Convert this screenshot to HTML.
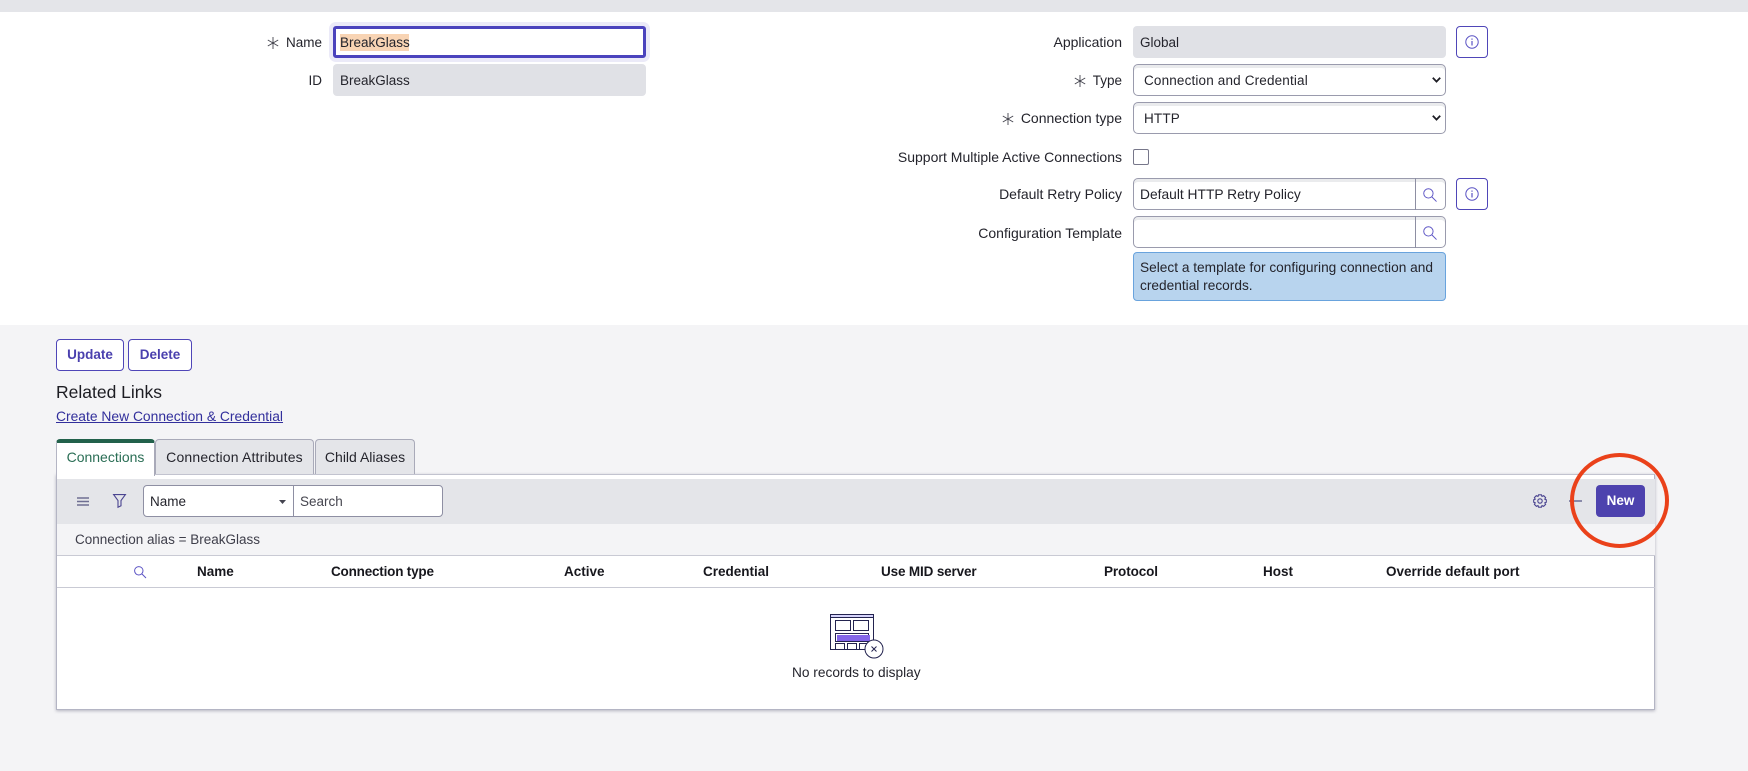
<!DOCTYPE html>
<html lang="en">
<head>
<meta charset="utf-8">
<title>Connection Alias</title>
<style>
html,body{margin:0;padding:0;width:1748px;height:771px;overflow:hidden;background:#f4f4f6}
body{position:relative;font-family:"Liberation Sans",sans-serif;font-size:13.5px;color:#24242c}
.a{position:absolute;box-sizing:border-box}
.t{position:absolute;white-space:nowrap;line-height:18px;height:18px}
.lr{text-align:right;right:626px;font-size:14px}
.ro{background:#e0e1e6;border-radius:4px}
.inp{background:#fff;border:1px solid #9a9bad;border-radius:5px;box-shadow:inset 0 3px 0 #eaebed}
.ib{border:1px solid #4f46b8;border-radius:4px;background:#fff}
.btn{border:1px solid #4f46b8;border-radius:4px;background:#fff;color:#4a40ae;font-weight:bold;text-align:center;line-height:30px;font-size:13.5px}
.h{font-weight:bold;top:563px;color:#17171d;font-size:13.5px}
.tab{background:#e4e5e9;border:1px solid #a9aab9;border-bottom:none;border-radius:4px 4px 0 0;line-height:34px;text-align:center;font-size:14px}
svg{position:absolute;overflow:visible}
</style>
</head>
<body>
<div class="a" style="left:0;top:0;width:1748px;height:12px;background:#e4e5e9"></div>
<div class="a" style="left:0;top:12px;width:1748px;height:313px;background:#fff"></div>

<!-- Left form -->
<svg style="left:267px;top:37px" width="12" height="12" viewBox="0 0 12 12" fill="none" stroke="#44444e" stroke-width=".9"><path d="M6 0V12M.8 3 11.2 9M11.2 3 .8 9"/></svg>
<span class="t" style="right:1426px;top:34px">Name</span>
<span class="t" style="right:1426px;top:72px">ID</span>
<div class="a" style="left:329px;top:22px;width:321px;height:40px;border-radius:7px;background:#ebeaf8"></div>
<div class="a" style="left:333px;top:26px;width:313px;height:32px;background:#fff;border:3px solid #4b43bd;border-radius:3px"></div>
<div class="a" style="left:340px;top:34px;width:69px;height:17px;background:#f8d4b4"></div>
<span class="t" style="left:340px;top:34px">BreakGlass</span>
<div class="a ro" style="left:333px;top:64px;width:313px;height:32px"></div>
<span class="t" style="left:340px;top:72px">BreakGlass</span>

<!-- Right form -->
<span class="t lr" style="top:33px">Application</span>
<div class="a ro" style="left:1133px;top:26px;width:313px;height:32px"></div>
<span class="t" style="left:1140px;top:34px">Global</span>
<div class="a ib" style="left:1456px;top:26px;width:32px;height:32px"></div>
<svg style="left:1465px;top:35px" width="14" height="14" viewBox="0 0 14 14" fill="none" stroke="#5b53c4"><circle cx="7" cy="7" r="6.2"/><path d="M7 6V10.5M7 3.5V4.8" stroke-width="1.2"/></svg>

<svg style="left:1074px;top:75px" width="12" height="12" viewBox="0 0 12 12" fill="none" stroke="#44444e" stroke-width=".9"><path d="M6 0V12M.8 3 11.2 9M11.2 3 .8 9"/></svg>
<span class="t lr" style="top:72px;font-size:13.5px">Type</span>
<div class="a inp" style="left:1133px;top:64px;width:313px;height:32px"></div>
<span class="t" style="left:1144px;top:72px;letter-spacing:.16px">Connection and Credential</span>
<svg style="left:1432px;top:77px" width="9" height="6" viewBox="0 0 9 6" fill="none" stroke="#1d1d24" stroke-width="1.8"><path d="M.8 .8 4.5 4.6 8.2 .8"/></svg>

<svg style="left:1002px;top:113px" width="12" height="12" viewBox="0 0 12 12" fill="none" stroke="#44444e" stroke-width=".9"><path d="M6 0V12M.8 3 11.2 9M11.2 3 .8 9"/></svg>
<span class="t lr" style="top:109px">Connection type</span>
<div class="a inp" style="left:1133px;top:102px;width:313px;height:32px"></div>
<span class="t" style="left:1144px;top:110px;letter-spacing:.16px">HTTP</span>
<svg style="left:1432px;top:115px" width="9" height="6" viewBox="0 0 9 6" fill="none" stroke="#1d1d24" stroke-width="1.8"><path d="M.8 .8 4.5 4.6 8.2 .8"/></svg>

<span class="t lr" style="top:148px">Support Multiple Active Connections</span>
<div class="a" style="left:1133px;top:149px;width:16px;height:16px;background:#fff;border:1px solid #77778a;border-radius:2px"></div>

<span class="t lr" style="top:185px">Default Retry Policy</span>
<div class="a inp" style="left:1133px;top:178px;width:313px;height:32px"></div>
<div class="a" style="left:1415px;top:178px;width:1px;height:32px;background:#8e8fa3"></div>
<span class="t" style="left:1140px;top:186px;font-size:13.8px">Default HTTP Retry Policy</span>
<svg style="left:1423px;top:188px" width="14" height="14" viewBox="0 0 15 15" fill="none" stroke="#5b53c4" stroke-width="1"><circle cx="5.8" cy="5.8" r="5"/><path d="M9.5 9.5 14.5 14.5"/></svg>
<div class="a ib" style="left:1456px;top:178px;width:32px;height:32px"></div>
<svg style="left:1465px;top:187px" width="14" height="14" viewBox="0 0 14 14" fill="none" stroke="#5b53c4"><circle cx="7" cy="7" r="6.2"/><path d="M7 6V10.5M7 3.5V4.8" stroke-width="1.2"/></svg>

<span class="t lr" style="top:224px">Configuration Template</span>
<div class="a inp" style="left:1133px;top:216px;width:313px;height:32px"></div>
<div class="a" style="left:1415px;top:216px;width:1px;height:32px;background:#8e8fa3"></div>
<svg style="left:1423px;top:226px" width="14" height="14" viewBox="0 0 15 15" fill="none" stroke="#5b53c4" stroke-width="1"><circle cx="5.8" cy="5.8" r="5"/><path d="M9.5 9.5 14.5 14.5"/></svg>

<div class="a" style="left:1133px;top:252px;width:313px;height:49px;background:#b8d4ee;border:1px solid #69a3dd;border-radius:4px"></div>
<span class="t" style="left:1140px;top:259px;font-size:13.7px">Select a template for configuring connection and</span>
<span class="t" style="left:1140px;top:277px;font-size:13.7px">credential records.</span>

<!-- Buttons -->
<div class="a btn" style="left:56px;top:339px;width:68px;height:32px">Update</div>
<div class="a btn" style="left:128px;top:339px;width:64px;height:32px">Delete</div>
<span class="t" style="left:56px;top:383px;font-size:17.5px;color:#1c1c22">Related Links</span>
<a class="t" style="left:56px;top:407px;color:#322f9c;text-decoration:underline;font-size:13.85px">Create New Connection &amp; Credential</a>

<!-- Tabs -->
<div class="a" style="left:56px;top:474px;width:1599px;height:236px;background:#fff;border:1px solid #b4b5c4;border-top-color:#c2c3cf;box-shadow:0 1px 3px rgba(60,60,90,.35)"></div>
<div class="a tab" style="left:56px;top:439px;width:99px;height:37px;background:#fff;border-top:4px solid #22614b;border-left:1px solid #b4b5c4;border-right:1px solid #a9aab9;color:#2a6e55;line-height:29px;z-index:2">Connections</div>
<div class="a tab" style="left:155px;top:439px;width:159px;height:35px;letter-spacing:.17px">Connection Attributes</div>
<div class="a tab" style="left:315px;top:439px;width:100px;height:35px">Child Aliases</div>

<!-- Toolbar -->
<div class="a" style="left:57px;top:479px;width:1598px;height:45px;background:#e4e5e9"></div>
<svg style="left:77px;top:497px" width="12" height="9" viewBox="0 0 12 9" fill="none" stroke="#6e6e92" stroke-width="1.6"><path d="M0 1H12M0 4.5H12M0 8H12"/></svg>
<svg style="left:113px;top:494px" width="13" height="14" viewBox="0 0 13 14" fill="none" stroke="#4a4490" stroke-width="1.1"><path d="M.6 .6H12.4L8 6.6V11.8L5 13.2V6.6Z"/></svg>
<div class="a" style="left:143px;top:485px;width:151px;height:32px;background:#fff;border:1px solid #8e8fa3;border-radius:4px 0 0 4px"></div>
<div class="a" style="left:293px;top:485px;width:150px;height:32px;background:#fff;border:1px solid #8e8fa3;border-radius:0 4px 4px 0"></div>
<span class="t" style="left:150px;top:493px">Name</span>
<svg style="left:279px;top:500px" width="7" height="4" viewBox="0 0 7 4"><path d="M0 0H7L3.5 4Z" fill="#444450"/></svg>
<span class="t" style="left:300px;top:493px;color:#45454f">Search</span>
<svg style="left:1533px;top:494px" width="14" height="14" viewBox="0 0 14 14" fill="none" stroke="#4a4490" stroke-width="1.1"><path d="M5.6 .8H8.4L9 2.4 10.7 1.7 12.6 3.6 11.8 5.2 13.3 5.8V8.2L11.8 8.8 12.6 10.4 10.6 12.3 9 11.6 8.4 13.2H5.6L5 11.6 3.4 12.3 1.4 10.4 2.2 8.8 .7 8.2V5.8L2.2 5.2 1.4 3.6 3.3 1.7 5 2.4Z"/><circle cx="7" cy="7" r="2.2"/></svg>
<div class="a" style="left:1569px;top:500px;width:13px;height:2px;background:#8a8aaa"></div>
<div class="a" style="left:1596px;top:485px;width:49px;height:32px;background:#4d42ae;border-radius:4px;color:#fff;font-weight:bold;text-align:center;line-height:32px;font-size:13.5px">New</div>

<!-- Filter row -->
<div class="a" style="left:57px;top:524px;width:1598px;height:31px;background:#f4f4f6"></div>
<span class="t" style="left:75px;top:531px;color:#3e3e4a">Connection alias = BreakGlass</span>
<div class="a" style="left:57px;top:555px;width:1598px;height:1px;background:#c9cad4"></div>
<svg style="left:134px;top:566px" width="12" height="12" viewBox="0 0 12 12" fill="none" stroke="#5b53c4"><circle cx="4.8" cy="4.8" r="4.2"/><path d="M8 8 12 12"/></svg>
<span class="t h" style="left:197px">Name</span>
<span class="t h" style="left:331px;letter-spacing:-.2px">Connection type</span>
<span class="t h" style="left:564px">Active</span>
<span class="t h" style="left:703px">Credential</span>
<span class="t h" style="left:881px;letter-spacing:-.15px">Use MID server</span>
<span class="t h" style="left:1104px;letter-spacing:-.1px">Protocol</span>
<span class="t h" style="left:1263px">Host</span>
<span class="t h" style="left:1386px">Override default port</span>
<div class="a" style="left:57px;top:587px;width:1598px;height:1px;background:#c9cad4"></div>

<!-- Empty state -->
<svg style="left:830px;top:614px" width="54" height="46" viewBox="0 0 54 46" fill="none" stroke="#23234f" stroke-width="1">
<rect x=".5" y=".5" width="43" height="35" fill="#fff"/>
<rect x=".5" y=".5" width="43" height="3" fill="#d6d4fb"/>
<rect x="5.5" y="6.5" width="15" height="10"/>
<rect x="23.5" y="6.5" width="15" height="10"/>
<rect x="5.5" y="19.5" width="33" height="8"/>
<rect x="7" y="21" width="33" height="6" fill="#8465e8" stroke="none"/>
<rect x="5.5" y="29.5" width="9" height="6"/>
<rect x="17.5" y="29.5" width="9" height="6"/>
<rect x="29.5" y="29.5" width="9" height="6"/>
<circle cx="44" cy="35" r="9" fill="#fff"/>
<path d="M41.5 32.5 46.5 37.5M46.5 32.5 41.5 37.5"/>
</svg>
<span class="t" style="left:792px;top:664px;font-size:13.7px">No records to display</span>

<!-- Annotation circle -->
<svg style="left:0;top:0" width="1748" height="771" fill="none"><ellipse cx="1619.5" cy="500.5" rx="47.5" ry="45.5" stroke="#ea411a" stroke-width="4"/></svg>
</body>
</html>
